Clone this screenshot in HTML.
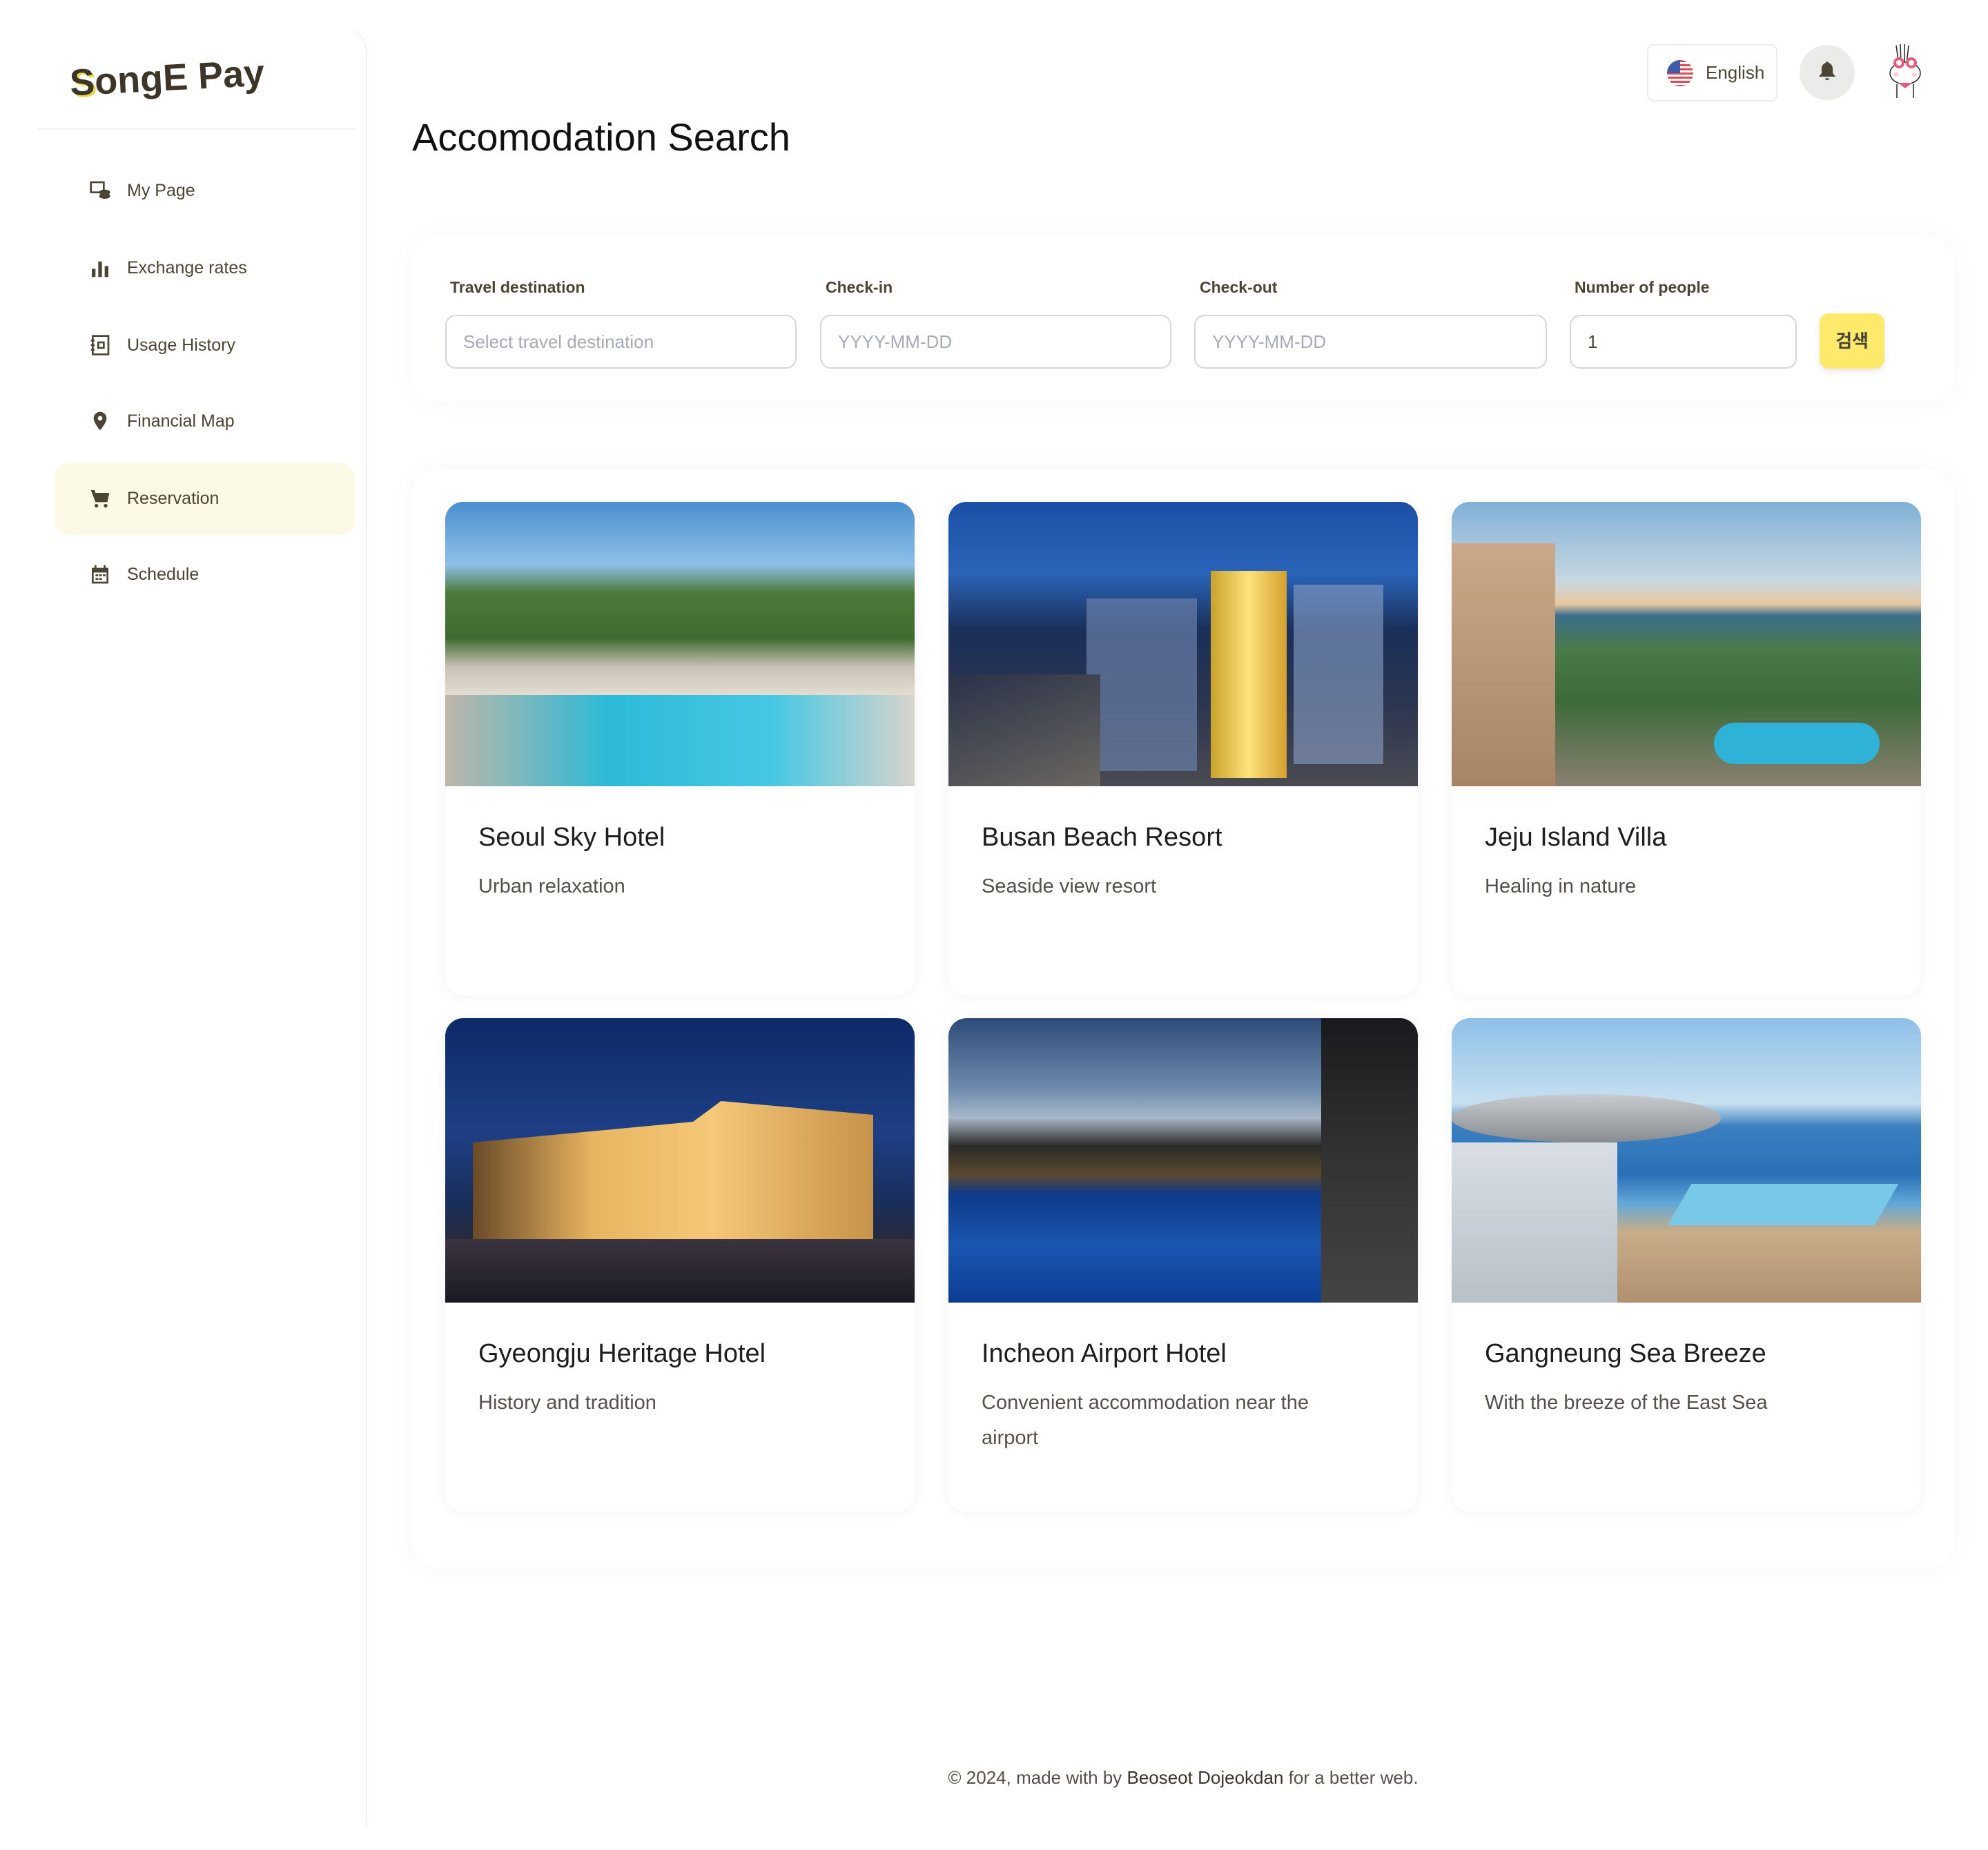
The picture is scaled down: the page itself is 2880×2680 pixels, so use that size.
<!DOCTYPE html>
<html><head><meta charset="utf-8">
<style>
*{box-sizing:border-box;margin:0;padding:0}
body{width:2880px;height:2680px;background:#fff;font-family:"Liberation Sans","Noto Sans CJK KR",sans-serif;position:relative;overflow:hidden;color:#4a4535}
.abs{position:absolute}
.side{left:0;top:37px;width:532px;height:2608px;border-right:2px solid #f0f0f0;border-top-right-radius:40px;background:#fff}
.menu{position:absolute;left:129px;font-size:25px;color:#4a4535;display:flex;align-items:center;height:40px}
.menu svg{width:32px;height:32px;margin-right:23px}
.card{background:#fff;border-radius:37px;box-shadow:0 0 40px rgba(0,0,0,.035)}
.lbl{position:absolute;top:403px;font-size:23px;font-weight:bold;color:#4a4535}
.inp{position:absolute;top:456px;height:78px;border:2px solid #d4d6dc;border-radius:15px;font-size:26px;color:#a6abb5;padding-left:24px;line-height:74px}
.hc{position:absolute;width:680px;height:715px;border-radius:26px;background:#fff;box-shadow:0 2px 18px rgba(0,0,0,.05);overflow:hidden}
.img{height:412px;position:relative;overflow:hidden}
.ht{position:absolute;left:48px;top:465px;font-size:38px;color:#1e1e1e}
.hs{position:absolute;left:48px;top:532px;font-size:29px;color:#555049;line-height:51px;width:560px}
</style></head><body>

<div class="abs side"></div>
<div class="abs" style="left:101px;top:82px;font-size:54px;font-weight:bold;color:#3d3528;letter-spacing:0px;transform:rotate(-3deg)"><span style="text-shadow:3px 3px 0 #e8d84a">S</span>ongE Pay</div>
<div class="abs" style="left:55px;top:186px;width:460px;height:2px;background:#f0f0f0"></div>

<div class="abs" style="left:79px;top:671px;width:435px;height:104px;background:#fcf9e6;border-radius:20px"></div>

<div class="menu" style="top:256px"><svg viewBox="0 0 24 24" fill="none" stroke="#4a4535" stroke-width="2"><rect x="2" y="3" width="14" height="11"/><ellipse cx="17" cy="14" rx="5" ry="2" fill="#4a4535"/><ellipse cx="17" cy="18" rx="5" ry="2" fill="#4a4535"/></svg>My Page</div>
<div class="menu" style="top:368px"><svg viewBox="0 0 24 24" fill="#4a4535"><rect x="3" y="13" width="4" height="9"/><rect x="10" y="5" width="4" height="17"/><rect x="17" y="10" width="4" height="12"/></svg>Exchange rates</div>
<div class="menu" style="top:480px"><svg viewBox="0 0 24 24" fill="none" stroke="#4a4535" stroke-width="2"><rect x="4" y="2" width="17" height="20"/><rect x="10" y="9" width="6" height="6"/><path d="M2 7h4M2 12h4M2 17h4"/></svg>Usage History</div>
<div class="menu" style="top:590px"><svg viewBox="0 0 24 24" fill="#4a4535"><path d="M12 2a7 7 0 0 0-7 7c0 5 7 13 7 13s7-8 7-13a7 7 0 0 0-7-7zm0 9.5a2.5 2.5 0 1 1 0-5 2.5 2.5 0 0 1 0 5z"/></svg>Financial Map</div>
<div class="menu" style="top:702px"><svg viewBox="0 0 24 24" fill="#4a4535"><path d="M2 3h4l1 3h15l-2 10H7z"/><circle cx="8" cy="20" r="2"/><circle cx="18" cy="20" r="2"/></svg>Reservation</div>
<div class="menu" style="top:812px"><svg viewBox="0 0 24 24" fill="#4a4535"><path d="M3 5h18v17H3z M5 10v10h14V10z"/><rect x="6" y="2" width="2" height="5"/><rect x="16" y="2" width="2" height="5"/><rect x="7" y="12" width="3" height="2"/><rect x="11" y="12" width="3" height="2"/><rect x="15" y="12" width="3" height="2"/><rect x="7" y="16" width="3" height="2"/><rect x="11" y="16" width="3" height="2"/></svg>Schedule</div>

<div class="abs" style="left:597px;top:166px;font-size:56px;color:#111">Accomodation Search</div>

<div class="abs" style="left:2386px;top:64px;width:189px;height:83px;border:2px solid #ebebeb;border-radius:10px;display:flex;align-items:center;padding-left:27px;font-size:26px;color:#4a4535">
<svg width="38" height="38" viewBox="0 0 38 38" style="margin-right:18px"><defs><clipPath id="c"><circle cx="19" cy="19" r="19"/></clipPath></defs><g clip-path="url(#c)"><rect width="38" height="38" fill="#fff"/><g fill="#e04a55"><rect y="0" width="38" height="3"/><rect y="6" width="38" height="3"/><rect y="12" width="38" height="3"/><rect y="18" width="38" height="3"/><rect y="24" width="38" height="3"/><rect y="30" width="38" height="3"/><rect y="36" width="38" height="3"/></g><rect width="19" height="19" fill="#3b5fa8"/></g></svg>English</div>
<div class="abs" style="left:2607px;top:65px;width:80px;height:80px;border-radius:50%;background:#ebebe9"></div>
<svg class="abs" style="left:2633px;top:88px" width="28" height="30" viewBox="0 0 24 26" fill="#4a4535"><path d="M12 1c-1 0-1.5.7-1.5 1.5C7 3.5 5 6.5 5 10v6l-3 3v1h20v-1l-3-3v-6c0-3.5-2-6.5-5.5-7.5C13.5 1.7 13 1 12 1z"/><path d="M9.5 22a2.5 2.5 0 0 0 5 0z"/></svg>
<svg class="abs" style="left:2720px;top:64px" width="80" height="80" viewBox="0 0 80 80"><path d="M27 2l4 28M33 0l1 28M39 0v28M45 2l-3 26" stroke="#222" stroke-width="1.5" fill="none"/><ellipse cx="40" cy="42" rx="22" ry="16" fill="#fff" stroke="#222" stroke-width="1.5"/><circle cx="31" cy="27" r="6" fill="#fff" stroke="#e85a7a" stroke-width="4"/><circle cx="49" cy="27" r="6" fill="#fff" stroke="#e85a7a" stroke-width="4"/><ellipse cx="27" cy="44" rx="4" ry="3" fill="#f9cfd6"/><ellipse cx="53" cy="44" rx="4" ry="3" fill="#f9cfd6"/><path d="M30 56l10 8 10-8z" fill="#e85a7a"/><path d="M28 58v20M52 58v20" stroke="#222" stroke-width="1.5"/></svg>

<div class="abs card" style="left:597px;top:343px;width:2234px;height:239px"></div>
<div class="lbl" style="left:652px">Travel destination</div>
<div class="lbl" style="left:1196px">Check-in</div>
<div class="lbl" style="left:1738px">Check-out</div>
<div class="lbl" style="left:2281px">Number of people</div>
<div class="inp" style="left:645px;width:509px">Select travel destination</div>
<div class="inp" style="left:1188px;width:509px">YYYY-MM-DD</div>
<div class="inp" style="left:1730px;width:511px">YYYY-MM-DD</div>
<div class="inp" style="left:2274px;width:329px;color:#4a4535">1</div>
<div class="abs" style="left:2636px;top:454px;width:94px;height:80px;background:#ffe96b;border-radius:14px;box-shadow:0 4px 10px rgba(0,0,0,.1);font-size:26px;font-weight:bold;color:#4a4535;text-align:center;line-height:80px">검색</div>

<div class="abs card" style="left:597px;top:680px;width:2234px;height:1591px"></div>

<div class="hc" style="left:645px;top:727px"><div class="img" style="background:linear-gradient(180deg,#4a8fd0 0%,#8fc0e8 22%,#4d7a3a 32%,#3f6b30 48%,#c9c2b5 58%,#e8e2d8 70%,#27b7d8 80%,#5fd0e8 100%)"><div class="abs" style="left:0;top:280px;width:680px;height:132px;background:linear-gradient(90deg,#bfb6a8,#2bbad8 35%,#47c8e4 70%,#d8d4cc)"></div></div><div class="ht">Seoul Sky Hotel</div><div class="hs">Urban relaxation</div></div>

<div class="hc" style="left:1374px;top:727px"><div class="img" style="background:linear-gradient(180deg,#1b4fa6 0%,#2a64b8 25%,#1a2f5a 45%,#2b3550 70%,#4a4a52 100%)"><div class="abs" style="left:380px;top:100px;width:110px;height:300px;background:linear-gradient(90deg,#c9a22a,#ffe27a,#d4a030)"></div><div class="abs" style="left:200px;top:140px;width:160px;height:250px;background:#6a7fa8;opacity:.7"></div><div class="abs" style="left:500px;top:120px;width:130px;height:260px;background:#8aa2c8;opacity:.6"></div><div class="abs" style="left:0;top:250px;width:220px;height:162px;background:linear-gradient(160deg,#2a3248,#6a6660)"></div></div><div class="ht">Busan Beach Resort</div><div class="hs">Seaside view resort</div></div>

<div class="hc" style="left:2103px;top:727px"><div class="img" style="background:linear-gradient(180deg,#7fb0d8 0%,#c8d8e0 28%,#e8c8a0 36%,#3a6e8c 40%,#4a7a48 52%,#3c6a3a 70%,#8a8070 100%)"><div class="abs" style="left:0;top:60px;width:150px;height:352px;background:linear-gradient(180deg,#caa888,#a88466)"></div><div class="abs" style="left:380px;top:320px;width:240px;height:60px;background:#2fb2d8;border-radius:30px"></div></div><div class="ht">Jeju Island Villa</div><div class="hs">Healing in nature</div></div>

<div class="hc" style="left:645px;top:1475px"><div class="img" style="background:linear-gradient(180deg,#0d2a68 0%,#1e3f86 40%,#1a2e5a 65%,#2a2a38 80%,#3a3038 100%)"><div class="abs" style="left:40px;top:120px;width:580px;height:200px;background:linear-gradient(90deg,#6a4a28,#e8b560 30%,#f4c878 60%,#c8924a);clip-path:polygon(0 30%,55% 15%,62% 0,100% 10%,100% 100%,0 100%)"></div><div class="abs" style="left:0;top:320px;width:680px;height:92px;background:linear-gradient(180deg,#3a3440,#1a1a22)"></div></div><div class="ht">Gyeongju Heritage Hotel</div><div class="hs">History and tradition</div></div>

<div class="hc" style="left:1374px;top:1475px"><div class="img" style="background:linear-gradient(180deg,#2e4a78 0%,#6e8cae 25%,#a8b8c8 35%,#2a2a28 45%,#5a4a30 55%,#0e3a8a 62%,#1a56b0 80%,#0c3c96 100%)"><div class="abs" style="left:540px;top:0;width:140px;height:412px;background:linear-gradient(180deg,#1a1a1e,#333,#444)"></div></div><div class="ht">Incheon Airport Hotel</div><div class="hs">Convenient accommodation near the airport</div></div>

<div class="hc" style="left:2103px;top:1475px"><div class="img" style="background:linear-gradient(180deg,#8ec0e8 0%,#c8e0f0 30%,#3a80c0 38%,#2a70b8 55%,#60a8d8 65%,#c8ad88 75%,#b09070 100%)"><div class="abs" style="left:0;top:110px;width:390px;height:70px;background:linear-gradient(180deg,#c8ccd0,#888c90);border-radius:50%"></div><div class="abs" style="left:0;top:180px;width:240px;height:232px;background:linear-gradient(180deg,#d8dee4,#b8c0c8)"></div><div class="abs" style="left:330px;top:240px;width:300px;height:60px;background:#78c8e8;transform:skewX(-30deg)"></div></div><div class="ht">Gangneung Sea Breeze</div><div class="hs">With the breeze of the East Sea</div></div>

<div class="abs" style="left:597px;top:2560px;width:2234px;text-align:center;font-size:26px;color:#555049">© 2024, made with by <span style="color:#3a3528">Beoseot Dojeokdan</span> for a better web.</div>
</body></html>
